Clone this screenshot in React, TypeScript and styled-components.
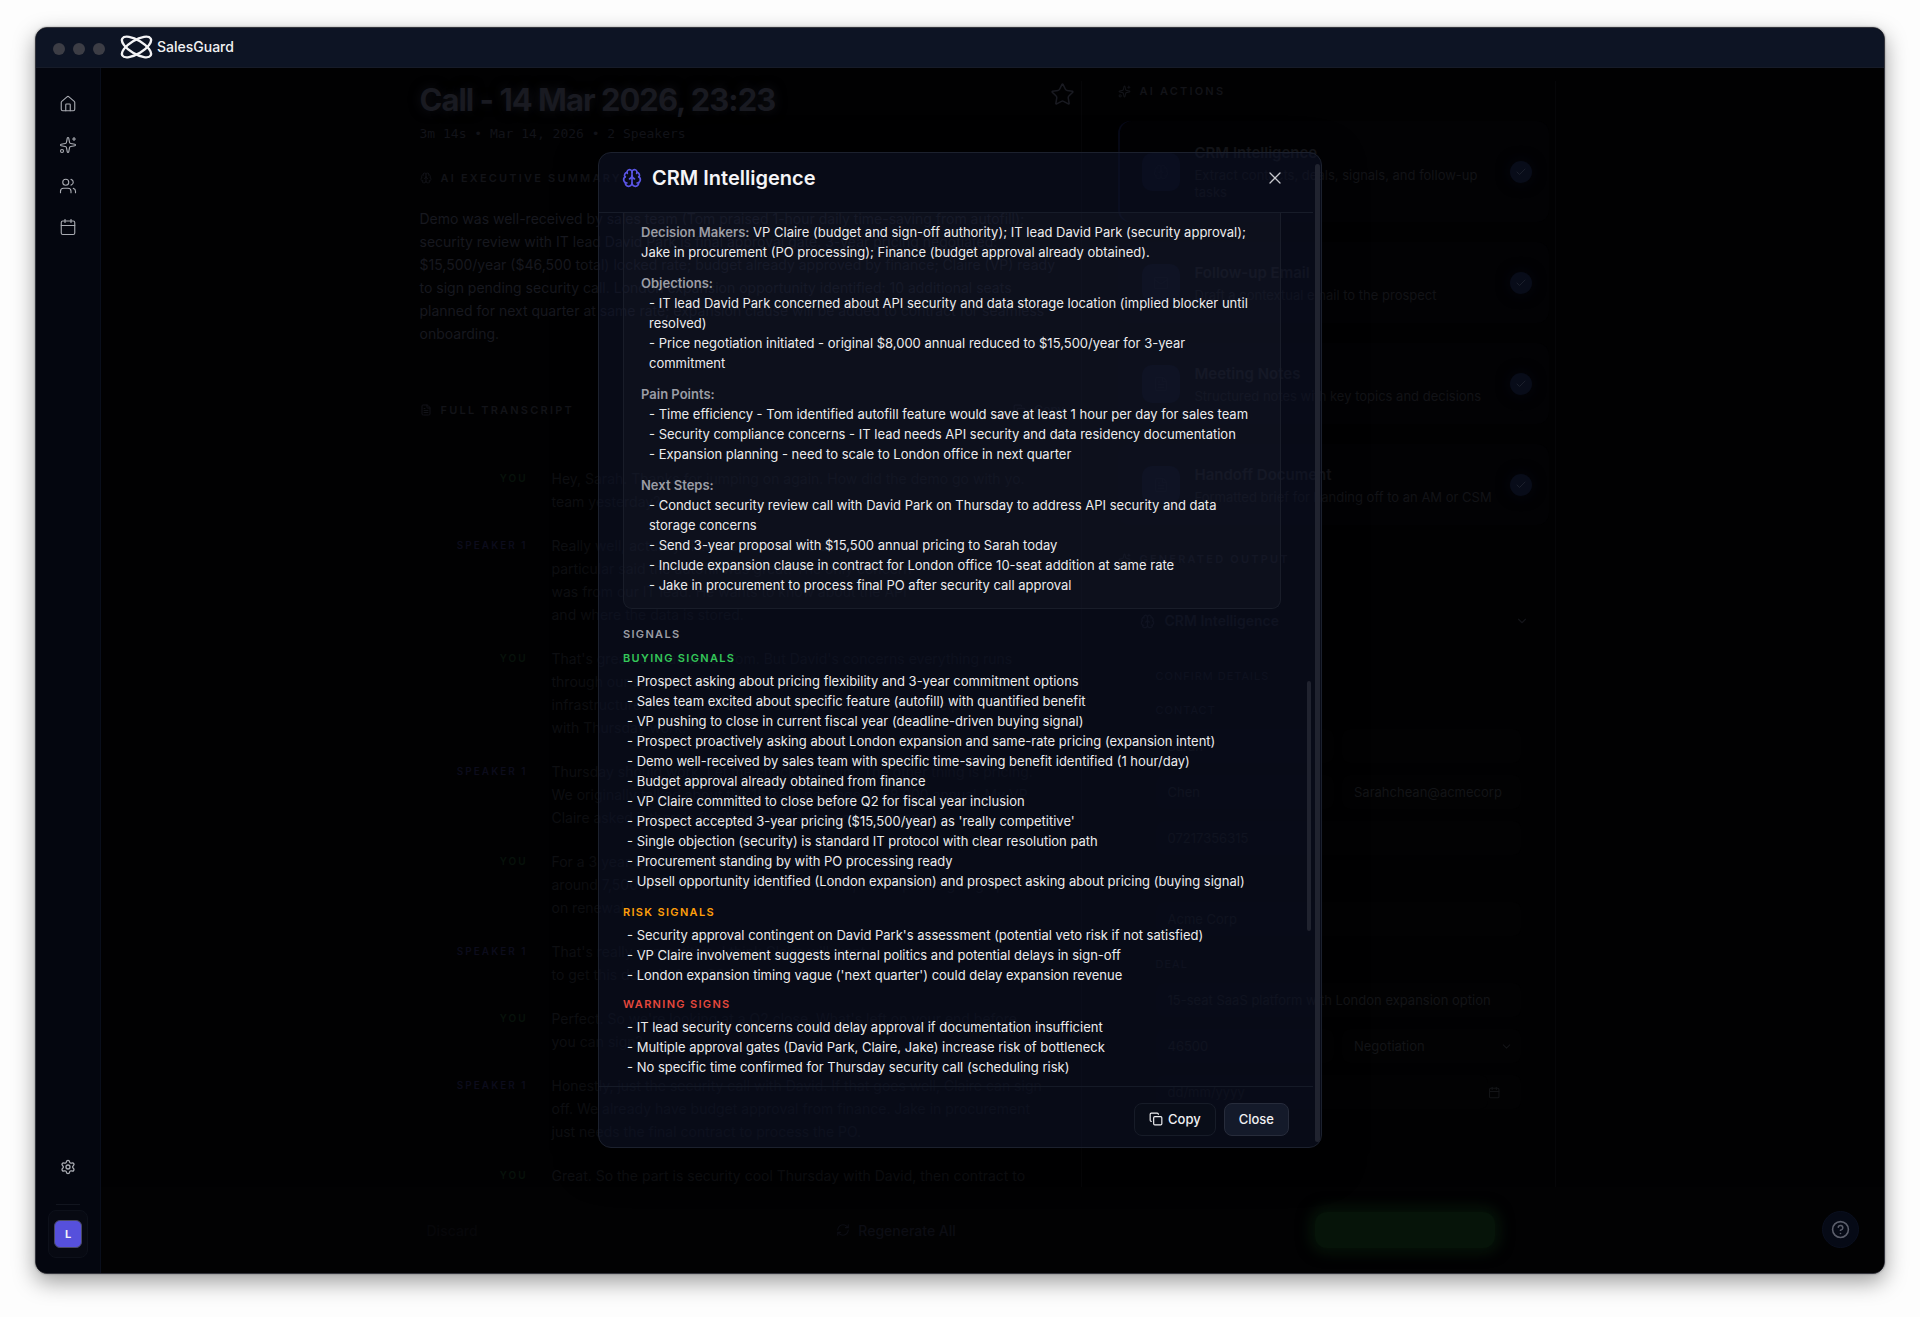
import React from "react";
import styled, { createGlobalStyle } from "styled-components";
import {
  Brain,
  Calendar,
  Check,
  ChevronDown,
  CircleQuestionMark,
  Copy,
  FileText,
  House,
  Mail,
  RefreshCw,
  Settings,
  Sparkles,
  Star,
  Users,
  X,
} from "lucide-react";

const color = {
  page: "#fdfdfd",
  stage: "#010102",
  bar: "#0d1424",
  side: "#04060f",
  line: "#161b28",
  icon: "#a9abb2",
  text: "#ececee",
  muted: "#9b9da5",
  indigo: "#5a55e6",
  green: "#34c759",
  orange: "#ff9f0a",
  red: "#e5483d",
};

const GlobalStyle = createGlobalStyle`
  *, *::before, *::after { box-sizing: border-box; }
  body {
    margin: 0;
    background: ${color.page};
    font-family: Inter, "Liberation Sans", sans-serif;
    -webkit-font-smoothing: antialiased;
  }
  button, input, select { font: inherit; color: inherit; }
  h1, h2, h3, p, ul { margin: 0; padding: 0; font-weight: inherit; font-size: inherit; }
  ul { list-style: none; }
`;

const Desktop = styled.div`
  display: flex;
  height: 100vh;
  min-height: 800px;
  padding: 27px 35px 43px;
`;

const Window = styled.div`
  position: relative;
  flex: 1;
  min-width: 0;
  display: flex;
  flex-direction: column;
  overflow: hidden;
  border: 1px solid #34353d;
  border-radius: 12px;
  background: ${color.stage};
`;

const Shadow = styled.div`
  flex: 1;
  min-width: 0;
  display: flex;
  border-radius: 12px;
  box-shadow: 0 8px 22px rgba(0, 0, 0, 0.38), 0 0 2px rgba(0, 0, 0, 0.4);
`;

const TitleBar = styled.header`
  display: flex;
  align-items: center;
  gap: 8px;
  height: 40px;
  flex: none;
  padding: 0 17px;
  background: ${color.bar};
  border-bottom: 1px solid ${color.line};
`;

const Dot = styled.span`
  width: 12px;
  height: 12px;
  margin-top: 3px;
  border-radius: 50%;
  background: #3c3d45;
`;

const Brand = styled.div`
  display: flex;
  align-items: center;
  gap: 4px;
  margin: 0 0 2px 7px;
  color: #f1f1f3;
  font-size: 14px;
  font-weight: 500;
`;

const Main = styled.div`
  flex: 1;
  min-height: 0;
  display: flex;
`;

const Sidebar = styled.nav`
  width: 65px;
  flex: none;
  display: flex;
  flex-direction: column;
  align-items: center;
  gap: 5px;
  padding: 18px 0 15px;
  background: ${color.side};
  border-right: 1px solid #090e1b;
`;

const NavLink = styled.a`
  display: grid;
  place-items: center;
  width: 36px;
  height: 36px;
  color: ${color.icon};
`;

const Spacer = styled.div`
  flex: 1;
`;

const SideRule = styled.hr`
  width: 24px;
  margin: 14px 0 0;
  border: 0;
  border-top: 1px solid #12151f;
`;

const AvatarButton = styled.button`
  display: grid;
  place-items: center;
  width: 40px;
  height: 48px;
  padding: 0;
  border: 1px solid #0d101a;
  border-radius: 8px;
  background: #070912;
`;

const Avatar = styled.span`
  display: grid;
  place-items: center;
  width: 28px;
  height: 28px;
  border: 1px solid #4a4a63;
  border-radius: 6px;
  background: #5650dc;
  color: #f4f4f8;
  font-size: 11px;
  font-weight: 700;
`;

const Stage = styled.main`
  flex: 1;
  min-width: 0;
  display: flex;
  flex-direction: column;
  overflow: hidden;
`;

const Columns = styled.div`
  flex: 1;
  min-height: 0;
  display: flex;
  justify-content: center;
  overflow: hidden;
  padding: 13px 10px 0 0;
`;

const CallColumn = styled.section`
  width: 662px;
  padding-right: 40px;
  border-right: 1px solid #060608;
`;

const CallHead = styled.div`
  display: flex;
  justify-content: space-between;
  color: #191a21;

  h1 {
    font-size: 31px;
    line-height: 38px;
    font-weight: 700;
    letter-spacing: -1px;
    text-shadow: 0 0 12px #121319;
  }

  svg {
    margin: 1px -34px 0 0;
  }
`;

const Meta = styled.p`
  margin-top: 5px;
  color: #121319;
  font-family: "DejaVu Sans Mono", monospace;
  font-size: 13px;
  line-height: 20px;
`;

const Eyebrow = styled.h2<{ $top: number }>`
  display: flex;
  align-items: center;
  gap: 9px;
  margin-top: ${(p) => p.$top}px;
  color: #121318;
  font-size: 11px;
  font-weight: 600;
  line-height: 16px;
  letter-spacing: 0.2em;
  text-transform: uppercase;
`;

const Summary = styled.p`
  margin-top: 21px;
  color: #17181f;
  font-size: 14px;
  line-height: 23px;
  white-space: nowrap;
`;

const Ghost = styled.button`
  display: flex;
  align-items: center;
  gap: 8px;
  margin: 0 -24px 0 auto;
  padding: 0;
  border: 0;
  background: none;
  color: #101116;
  font-size: 12px;
  font-weight: 500;
  letter-spacing: normal;
  text-transform: none;
`;

const Transcript = styled.ul`
  display: flex;
  flex-direction: column;
  gap: 21px;
  margin-top: 49px;
`;

const Turn = styled.li`
  display: grid;
  grid-template-columns: 108px 1fr;
  gap: 24px;
  color: #0e0f12;
  font-size: 14px;
  line-height: 23px;
  white-space: nowrap;
`;

const Speaker = styled.span<{ $you: boolean }>`
  color: ${(p) => (p.$you ? "#07120b" : "#0c0c1c")};
  font-size: 10px;
  font-weight: 600;
  letter-spacing: 2px;
  text-align: right;
`;

const ActionColumn = styled.section`
  width: 474px;
  padding: 0 6px 0 36px;
  border-right: 1px solid #060608;
`;

const ActionList = styled.ul`
  display: flex;
  flex-direction: column;
  gap: 20px;
  margin-top: 22px;
`;

const Action = styled.li<{ $active?: boolean }>`
  display: flex;
  align-items: center;
  gap: 15px;
  height: ${(p) => (p.$active ? 101 : 81)}px;
  padding: 0 17px 0 24px;
  border-radius: 12px;
  background: #020204;
  box-shadow: ${(p) => (p.$active ? "inset 2px 0 0 #070917" : "none")};
`;

const Tile = styled.span`
  display: grid;
  place-items: center;
  width: 38px;
  height: 38px;
  flex: none;
  border-radius: 10px;
  background: #050816;
  color: #0b0e1a;
`;

const ActionText = styled.div`
  flex: 1;
  min-width: 0;
  margin-right: -4px;
  padding-bottom: 3px;
  color: #15161b;
  font-size: 15px;
  font-weight: 600;
  line-height: 28px;

  p {
    color: #121317;
    font-size: 13px;
    font-weight: 400;
    line-height: 17px;
  }
`;

const Done = styled.span`
  display: grid;
  place-items: center;
  width: 22px;
  height: 22px;
  flex: none;
  border-radius: 50%;
  background: #080c19;
  box-shadow: 0 0 14px #04060f;
  color: #1c202c;
`;

const Output = styled.form`
  display: flex;
  flex-direction: column;
  gap: 12px;
  margin-top: 44px;
  padding: 0 20px 0 22px;
  color: #101116;
  font-size: 13px;
`;

const OutputHead = styled.div`
  display: flex;
  align-items: center;
  gap: 10px;
  color: #131419;
  font-size: 14px;
  font-weight: 600;
  line-height: 20px;

  svg:last-child {
    margin-left: auto;
  }
`;

const Legend = styled.h3<{ $top: number }>`
  margin-top: ${(p) => p.$top}px;
  padding-left: 16px;
  font-size: 11px;
  line-height: 14px;
  letter-spacing: 1px;
`;

const FieldRow = styled.div`
  display: grid;
  grid-template-columns: 1fr 1fr;
  gap: 8px;
  padding: 0 8px 0 16px;
`;

const Field = styled.input<{ $wide?: boolean }>`
  grid-column: ${(p) => (p.$wide ? "1 / -1" : "auto")};
  min-width: 0;
  width: 100%;
  height: 34px;
  padding: 0 12px;
  border: 0;
  border-radius: 8px;
  background: #020203;
  color: #131417;

  &::placeholder {
    color: #0f1013;
  }
`;

const DateWrap = styled.div`
  grid-column: 1 / -1;
  display: flex;
  align-items: center;
  padding-right: 20px;
  border-radius: 8px;
  background: #020203;
  color: #131417;
`;

const SelectWrap = styled.div`
  display: flex;
  align-items: center;
  padding-right: 8px;
  border-radius: 8px;
  background: #020203;
  color: #131417;
`;

const Select = styled.select`
  flex: 1;
  min-width: 0;
  height: 34px;
  padding: 0 12px;
  border: 0;
  appearance: none;
  background: none;
  color: inherit;
`;

const ActionBar = styled.footer`
  flex: none;
  display: flex;
  align-items: center;
  justify-content: center;
  height: 86px;
  padding: 0 12px 0 0;
  background: #020203;
`;

const ActionBarInner = styled.div`
  display: flex;
  align-items: center;
  justify-content: space-between;
  width: 1136px;
  padding: 0 60px 0 8px;
`;

const BarButton = styled.button<{ $faint?: boolean }>`
  display: flex;
  align-items: center;
  gap: 8px;
  padding: 0;
  border: 0;
  background: none;
  color: ${(p) => (p.$faint ? "#07070a" : "#0c0d14")};
  font-size: 14px;
  font-weight: 500;
`;

const PushButton = styled.button`
  width: 180px;
  height: 36px;
  border: 0;
  border-radius: 12px;
  background: #061409;
  box-shadow: 0 0 14px 5px #061409;
`;

const HelpButton = styled.button`
  position: absolute;
  right: 25px;
  bottom: 25px;
  display: grid;
  place-items: center;
  width: 37px;
  height: 37px;
  padding: 0;
  border: 1px solid #0a0f1e;
  border-radius: 50%;
  background: #060a16;
  color: #5b5e6b;
`;

const Overlay = styled.div`
  position: absolute;
  inset: 0 0 1px;
  display: flex;
  align-items: center;
  justify-content: center;
  pointer-events: none;
`;

const Modal = styled.div`
  display: flex;
  width: 724px;
  max-width: 90%;
  height: 80%;
  overflow: hidden;
  pointer-events: auto;
  border: 1px solid #1c212e;
  border-radius: 13px;
  background: rgba(13, 19, 38, 0.6);
  box-shadow: 0 12px 40px rgba(0, 0, 0, 0.5);
`;

const ModalColumn = styled.div`
  flex: 1;
  min-width: 0;
  display: flex;
  flex-direction: column;
`;

const ModalHead = styled.div`
  flex: none;
  display: flex;
  align-items: center;
  gap: 10px;
  height: 60px;
  padding: 0 28px 10px 23px;
  border-bottom: 1px solid #171c29;
  color: #f5f5f7;

  h2 {
    flex: 1;
    font-size: 20px;
    font-weight: 600;
    line-height: 26px;
  }
`;

const IconButton = styled.button`
  display: grid;
  place-items: center;
  width: 20px;
  height: 20px;
  padding: 0;
  border: 0;
  background: none;
  color: #c8c9ce;
`;

const Scroller = styled.div`
  flex: 1;
  min-height: 0;
  display: flex;
  overflow: hidden;
`;

const ModalBody = styled.div`
  flex: 1;
  min-width: 0;
  padding: 0 24px;
  color: ${color.text};
  font-size: 13px;
  line-height: 20px;
`;

const Rail = styled.div<{ $w: number; $top: number }>`
  flex: none;
  width: 8px;
  padding-top: ${(p) => p.$top}px;

  &::after {
    content: "";
    display: block;
    width: ${(p) => p.$w}px;
    height: ${(p) => (p.$w === 4 ? "250px" : "calc(100% - 5px)")};
    margin-left: 2px;
    border-radius: 3px;
    background: #20232f;
  }
`;

const Card = styled.section`
  display: flex;
  flex-direction: column;
  gap: 11px;
  padding: 9px 15px 13px 17px;
  border: 1px solid #191d29;
  border-top: 0;
  border-radius: 0 0 9px 9px;
  background: rgba(255, 255, 255, 0.025);
`;

const Label = styled.strong`
  color: ${color.muted};
  font-weight: 600;
`;

const Lines = styled.ul<{ $indent: number }>`
  padding-left: ${(p) => p.$indent}px;
`;

const SectionTitle = styled.h3`
  margin-top: 17px;
  color: ${color.muted};
  font-size: 11px;
  font-weight: 600;
  line-height: 16px;
  letter-spacing: 0.12em;
`;

const SignalTitle = styled.h3<{ $color: string; $top: number }>`
  margin: ${(p) => p.$top}px 0 5px;
  color: ${(p) => p.$color};
  font-size: 11px;
  font-weight: 600;
  line-height: 16px;
  letter-spacing: 0.12em;
`;

const ModalFoot = styled.div`
  flex: none;
  display: flex;
  justify-content: flex-end;
  gap: 8px;
  padding: 16px 24px 11px;
  border-top: 1px solid #151a27;
`;

const Button = styled.button<{ $solid?: boolean }>`
  display: flex;
  align-items: center;
  gap: 5px;
  height: 33px;
  padding: 0 14px;
  border: 1px solid ${(p) => (p.$solid ? "#272c3b" : "#171c28")};
  border-radius: 8px;
  background: ${(p) => (p.$solid ? "#141a2a" : "#090d18")};
  color: #f0f0f2;
  font-size: 13px;
  font-weight: 500;
`;

const nav = [
  { label: "Home", Icon: House },
  { label: "Insights", Icon: Sparkles },
  { label: "Contacts", Icon: Users },
  { label: "Calendar", Icon: Calendar },
];

const summary = [
  "Demo was well-received by sales team (Tom praised 1-hour daily time-saving from autofill);",
  "security review with IT lead David Park is final approval gate. 3-year pricing negotiated:",
  "$15,500/year ($46,500 total) locked rate; budget already approved by finance; Claire (VP) ready",
  "to sign pending security call. London expansion opportunity identified: 10 additional seats",
  "planned for next quarter at same rate; expansion clause will be added to contract for seamless",
  "onboarding.",
];

const turns = [
  { who: "YOU", lines: ["Hey, Sarah. Thanks for jumping on again. How did the demo go with yo.", "team yesterday?"] },
  {
    who: "SPEAKER 1",
    lines: [
      "Really well, actually. The team loved the demo.",
      "particular said the autofill was great. The only concern",
      "was from our IT lead. He wants to know about the API",
      "and where the data is stored.",
    ],
  },
  {
    who: "YOU",
    lines: [
      "That's great to hear about Tom. But David's concerns everything runs",
      "through our secure cloud.",
      "infrastructure and we can do a security review call if that helps",
      "with Thursday work.",
    ],
  },
  {
    who: "SPEAKER 1",
    lines: [
      "Thursday should work. Let me check with him. The other thing is pricing.",
      "We originally talked about the 15-seat package at $8,000 annual. My VP",
      "Claire asked if there's flexibility on a 3-year commitment.",
    ],
  },
  {
    who: "YOU",
    lines: [
      "For a 3 year deal we can do 15,500 per year. That saves you",
      "around 7,500 over the term and locks the rate, no surprises going up",
      "on renewal.",
    ],
  },
  { who: "SPEAKER 1", lines: ["That's really competitive. I think Claire will want", "to get this done before Q2."] },
  {
    who: "YOU",
    lines: ["Perfect. So we're looking at a Q2 close. What's left on your end before", "you can sign?"],
  },
  {
    who: "SPEAKER 1",
    lines: [
      "Honestly, just the security call with David. If that goes well, Claire can sign",
      "off. We already have budget approval from finance. Jake in procurement",
      "just needs the final contract to process the PO.",
    ],
  },
  { who: "YOU", lines: ["Great. So the part is security cool Thursday with David, then contract to"] },
];

const actions = [
  { title: "CRM Intelligence", text: "Extract contacts, deals, signals, and follow-up tasks", Icon: Brain },
  { title: "Follow-up Email", text: "Draft a contextual email to the prospect", Icon: Mail },
  { title: "Meeting Notes", text: "Structured notes with key topics and decisions", Icon: FileText },
  { title: "Handoff Document", text: "Formatted brief for handing off to an AM or CSM", Icon: FileText },
];

const groups = [
  {
    label: "Objections:",
    items: [
      "IT lead David Park concerned about API security and data storage location (implied blocker until resolved)",
      "Price negotiation initiated - original $8,000 annual reduced to $15,500/year for 3-year commitment",
    ],
  },
  {
    label: "Pain Points:",
    items: [
      "Time efficiency - Tom identified autofill feature would save at least 1 hour per day for sales team",
      "Security compliance concerns - IT lead needs API security and data residency documentation",
      "Expansion planning - need to scale to London office in next quarter",
    ],
  },
  {
    label: "Next Steps:",
    items: [
      "Conduct security review call with David Park on Thursday to address API security and data storage concerns",
      "Send 3-year proposal with $15,500 annual pricing to Sarah today",
      "Include expansion clause in contract for London office 10-seat addition at same rate",
      "Jake in procurement to process final PO after security call approval",
    ],
  },
];

const signals = [
  {
    title: "BUYING SIGNALS",
    tone: color.green,
    top: 8,
    items: [
      "Prospect asking about pricing flexibility and 3-year commitment options",
      "Sales team excited about specific feature (autofill) with quantified benefit",
      "VP pushing to close in current fiscal year (deadline-driven buying signal)",
      "Prospect proactively asking about London expansion and same-rate pricing (expansion intent)",
      "Demo well-received by sales team with specific time-saving benefit identified (1 hour/day)",
      "Budget approval already obtained from finance",
      "VP Claire committed to close before Q2 for fiscal year inclusion",
      "Prospect accepted 3-year pricing ($15,500/year) as 'really competitive'",
      "Single objection (security) is standard IT protocol with clear resolution path",
      "Procurement standing by with PO processing ready",
      "Upsell opportunity identified (London expansion) and prospect asking about pricing (buying signal)",
    ],
  },
  {
    title: "RISK SIGNALS",
    tone: color.orange,
    top: 13,
    items: [
      "Security approval contingent on David Park's assessment (potential veto risk if not satisfied)",
      "VP Claire involvement suggests internal politics and potential delays in sign-off",
      "London expansion timing vague ('next quarter') could delay expansion revenue",
    ],
  },
  {
    title: "WARNING SIGNS",
    tone: color.red,
    top: 11,
    items: [
      "IT lead security concerns could delay approval if documentation insufficient",
      "Multiple approval gates (David Park, Claire, Jake) increase risk of bottleneck",
      "No specific time confirmed for Thursday security call (scheduling risk)",
    ],
  },
];

function Logo() {
  return (
    <svg width="33" height="24" viewBox="0 0 33 24" fill="none" stroke="#f3f3f5" aria-hidden="true">
      <ellipse cx="16.5" cy="12" rx="16.5" ry="6.8" strokeWidth="2.4" transform="rotate(31 16.5 12)" />
      <ellipse cx="16.5" cy="12" rx="16.5" ry="6.8" strokeWidth="2.4" transform="rotate(-31 16.5 12)" />
    </svg>
  );
}

function CallPage() {
  return (
    <Stage>
      <Columns>
        <CallColumn>
          <CallHead>
            <h1>Call - 14 Mar 2026, 23:23</h1>
            <Star size={25} strokeWidth={1.5} />
          </CallHead>
          <Meta>3m 14s • Mar 14, 2026 • 2 Speakers</Meta>
          <Eyebrow $top={26}>
            <Brain size={12} />
            AI Executive Summary
          </Eyebrow>
          <Summary>
            {summary.map((line) => (
              <React.Fragment key={line}>
                {line}
                <br />
              </React.Fragment>
            ))}
          </Summary>
          <Eyebrow $top={57}>
            <FileText size={12} />
            Full Transcript
            <Ghost type="button">
              <Copy size={13} />
              Copy
            </Ghost>
          </Eyebrow>
          <Transcript>
            {turns.map((turn) => (
              <Turn key={turn.lines[0]}>
                <Speaker $you={turn.who === "YOU"}>{turn.who}</Speaker>
                <div>
                  {turn.lines.map((line) => (
                    <div key={line}>{line}</div>
                  ))}
                </div>
              </Turn>
            ))}
          </Transcript>
        </CallColumn>
        <ActionColumn>
          <Eyebrow $top={2}>
            <Sparkles size={13} />
            AI Actions
          </Eyebrow>
          <ActionList>
            {actions.map(({ title, text, Icon }, i) => (
              <Action key={title} $active={i === 0}>
                <Tile>
                  <Icon size={16} />
                </Tile>
                <ActionText>
                  {title}
                  <p>{text}</p>
                </ActionText>
                <Done>
                  <Check size={12} />
                </Done>
              </Action>
            ))}
          </ActionList>
          <Eyebrow $top={26}>
            <Sparkles size={13} />
            Generated Output
          </Eyebrow>
          <Output>
            <OutputHead>
              <Brain size={15} />
              CRM Intelligence
              <ChevronDown size={14} />
            </OutputHead>
            <Legend $top={26}>CONFIRM DETAILS</Legend>
            <Legend $top={8}>CONTACT</Legend>
            <FieldRow>
              <Field aria-label="First name" defaultValue="Sarah" />
              <Field aria-label="Job title" />
            </FieldRow>
            <FieldRow>
              <Field aria-label="Last name" defaultValue="Chen" />
              <Field aria-label="Email" defaultValue="Sarahchean@acmecorp" />
            </FieldRow>
            <FieldRow>
              <Field aria-label="Phone" defaultValue="07217356315" $wide />
            </FieldRow>
            <Legend $top={9}>COMPANY</Legend>
            <FieldRow>
              <Field aria-label="Company" defaultValue="Acme Corp" $wide />
            </FieldRow>
            <Legend $top={9}>DEAL</Legend>
            <FieldRow>
              <Field aria-label="Deal name" defaultValue="15-seat SaaS platform with London expansion option" $wide />
            </FieldRow>
            <FieldRow>
              <Field aria-label="Amount" defaultValue="46500" />
              <SelectWrap>
                <Select aria-label="Stage" defaultValue="Negotiation">
                  <option>Negotiation</option>
                </Select>
                <ChevronDown size={13} />
              </SelectWrap>
            </FieldRow>
            <FieldRow>
              <DateWrap>
                <Field aria-label="Close date" placeholder="dd/mm/yyyy" />
                <Calendar size={13} />
              </DateWrap>
            </FieldRow>
          </Output>
        </ActionColumn>
      </Columns>
      <ActionBar>
        <ActionBarInner>
          <BarButton type="button" $faint>
            Discard
          </BarButton>
          <BarButton type="button">
            <RefreshCw size={14} />
            Regenerate All
          </BarButton>
          <PushButton type="button" aria-label="Push to CRM" />
        </ActionBarInner>
      </ActionBar>
    </Stage>
  );
}

function CrmModal() {
  return (
    <Overlay>
      <Modal role="dialog" aria-labelledby="crm-title">
        <ModalColumn>
          <ModalHead>
            <Brain size={20} strokeWidth={2} color={color.indigo} />
            <h2 id="crm-title">CRM Intelligence</h2>
            <IconButton type="button" aria-label="Close dialog">
              <X size={20} strokeWidth={1.5} />
            </IconButton>
          </ModalHead>
          <Scroller>
            <ModalBody>
              <Card>
                <p>
                  <Label>Decision Makers:</Label> VP Claire (budget and sign-off authority); IT lead David Park
                  (security approval); Jake in procurement (PO processing); Finance (budget approval already
                  obtained).
                </p>
                {groups.map((group) => (
                  <div key={group.label}>
                    <Label>{group.label}</Label>
                    <Lines $indent={8}>
                      {group.items.map((item) => (
                        <li key={item}>- {item}</li>
                      ))}
                    </Lines>
                  </div>
                ))}
              </Card>
              <SectionTitle>SIGNALS</SectionTitle>
              {signals.map((group) => (
                <React.Fragment key={group.title}>
                  <SignalTitle $color={group.tone} $top={group.top}>
                    {group.title}
                  </SignalTitle>
                  <Lines $indent={4}>
                    {group.items.map((item) => (
                      <li key={item}>- {item}</li>
                    ))}
                  </Lines>
                </React.Fragment>
              ))}
            </ModalBody>
            <Rail $w={4} $top={468} />
          </Scroller>
          <ModalFoot>
            <Button type="button">
              <Copy size={14} />
              Copy
            </Button>
            <Button type="button" $solid>
              Close
            </Button>
          </ModalFoot>
        </ModalColumn>
        <Rail $w={5} $top={11} />
      </Modal>
    </Overlay>
  );
}

export default function App() {
  return (
    <>
      <GlobalStyle />
      <Desktop>
        <Shadow>
          <Window>
            <TitleBar>
              <Dot />
              <Dot />
              <Dot />
              <Brand>
                <Logo />
                SalesGuard
              </Brand>
            </TitleBar>
            <Main>
              <Sidebar aria-label="Primary">
                {nav.map(({ label, Icon }) => (
                  <NavLink key={label} href="#" aria-label={label}>
                    <Icon size={18} strokeWidth={1.5} />
                  </NavLink>
                ))}
                <Spacer />
                <NavLink href="#" aria-label="Settings">
                  <Settings size={16} strokeWidth={2} />
                </NavLink>
                <SideRule />
                <AvatarButton type="button" aria-label="Account">
                  <Avatar>L</Avatar>
                </AvatarButton>
              </Sidebar>
              <CallPage />
            </Main>
            <HelpButton type="button" aria-label="Help">
              <CircleQuestionMark size={19} strokeWidth={2} />
            </HelpButton>
            <CrmModal />
          </Window>
        </Shadow>
      </Desktop>
    </>
  );
}
